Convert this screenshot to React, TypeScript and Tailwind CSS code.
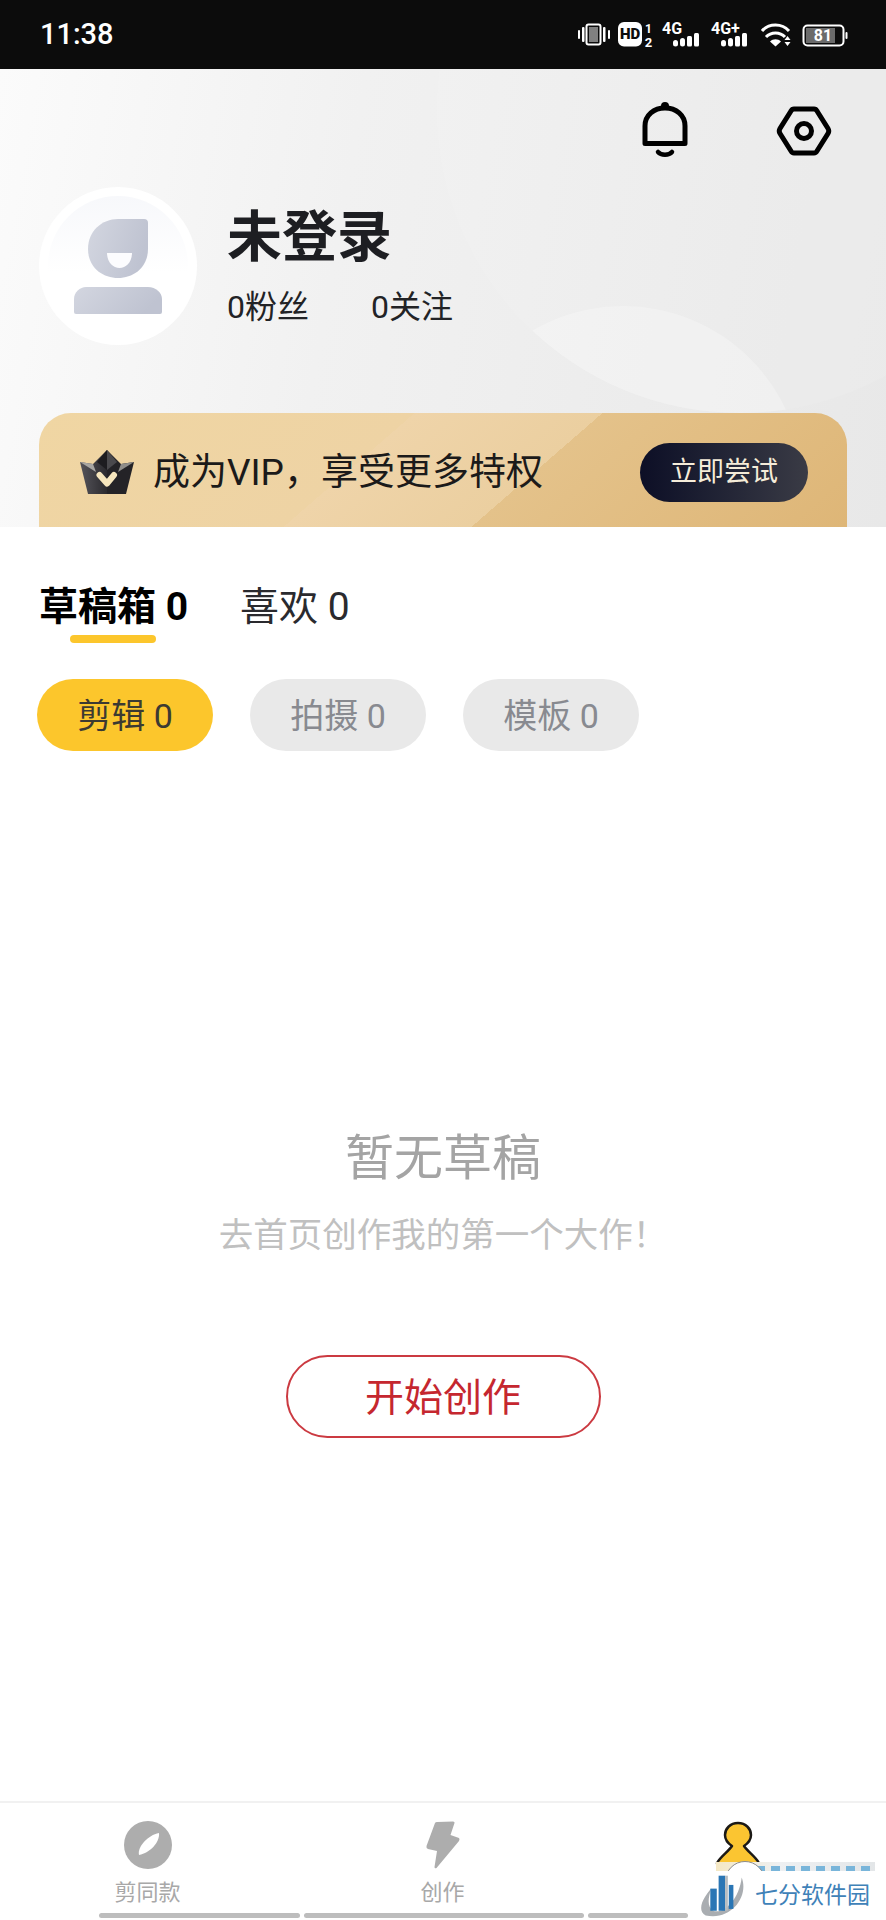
function StatusIcons() {
  // viewBox x = page x - 570
  return (
    <svg width="282" height="69" viewBox="0 0 282 69" fill="none">
      {/* vibrate */}
      <g fill="#fff">
        <rect x="8" y="30" width="2" height="9" rx="1" />
        <rect x="12" y="27" width="2.5" height="15" rx="1" />
        <rect x="33" y="27" width="2.5" height="15" rx="1" />
        <rect x="38" y="30" width="2" height="9" rx="1" />
      </g>
      <rect x="16.5" y="24.5" width="14" height="20" rx="2" stroke="#fff" strokeWidth="2" />
      <rect x="19" y="27" width="9" height="15" fill="#808080" />
      {/* HD */}
      <rect x="48" y="22" width="24" height="24.5" rx="6" fill="#fff" />
      <text x="60" y="39" textAnchor="middle" fontSize="15" fontWeight="900" fill="#0c0c0c" fontFamily="Roboto">HD</text>
      <text x="78.500" y="33" textAnchor="middle" fontSize="12" fontWeight="700" fill="#fff" fontFamily="Roboto">1</text>
      <text x="78.500" y="47" textAnchor="middle" fontSize="13" fontWeight="700" fill="#fff" fontFamily="Roboto">2</text>
      {/* 4G */}
      <text x="92" y="34" fontSize="16" fontWeight="700" fill="#fff" fontFamily="Roboto">4G</text>
      <g fill="#fff">
        <rect x="103" y="40" width="5" height="6.500" rx="2.500" />
        <rect x="110" y="38" width="5" height="8.500" rx="2.500" />
        <rect x="117" y="36" width="5" height="10.500" rx="1.500" />
        <rect x="124" y="33" width="5" height="13.500" rx="1.500" />
      </g>
      {/* 4G+ */}
      <text x="141" y="34" fontSize="16" fontWeight="700" fill="#fff" fontFamily="Roboto">4G+</text>
      <g fill="#fff">
        <rect x="151" y="40" width="5" height="6.500" rx="2.500" />
        <rect x="158" y="38" width="5" height="8.500" rx="2.500" />
        <rect x="165" y="36" width="5" height="10.500" rx="1.500" />
        <rect x="172" y="33" width="5" height="13.500" rx="1.500" />
      </g>
      {/* wifi */}
      <g stroke="#fff" strokeWidth="3" fill="none">
        <path d="M192 31 C199 23 212 23 219 31" />
        <path d="M196 37 C201 31.500 210 31.500 215 37" />
      </g>
      <path d="M200 41.500 C203 38.500 208 38.500 211 41.500 L205.500 46.500 Z" fill="#fff" />
      <path d="M217.500 36 L220.500 40 H214.500 Z M214.500 42 H220.500 L217.500 46 Z" fill="#fff" />
      {/* battery */}
      <rect x="233.500" y="25.500" width="40" height="20" rx="4" stroke="#fff" strokeWidth="2" />
      <rect x="236" y="28" width="29" height="15" fill="#6b6b6b" />
      <rect x="275.500" y="32" width="2" height="7" rx="1" fill="#fff" />
      <text x="253" y="41" textAnchor="middle" fontSize="16" fontWeight="700" fill="#fff" fontFamily="Roboto">81</text>
    </svg>
  );
}

function Bell() {
  return (
    <svg width="48" height="56" viewBox="0 0 48 56" fill="none">
      <circle cx="24" cy="4" r="4" fill="#000" />
      <path
        d="M4 41.500 V24 C4 13 13 6 24 6 C35 6 44 13 44 24 V41.500 Z"
        stroke="#000"
        strokeWidth="5"
        strokeLinejoin="round"
      />
      <path d="M17 50 C20 53.500 28 53.500 31 50" stroke="#000" strokeWidth="4.500" strokeLinecap="round" />
    </svg>
  );
}

function SettingsHex() {
  return (
    <svg width="56" height="50" viewBox="0 0 56 50" fill="none">
      <path
        d="M18 3 H38 Q40 3 41 5 L52 22.500 Q53.500 25 52 27.500 L41 45 Q40 47 38 47 H18 Q16 47 15 45 L4 27.500 Q2.500 25 4 22.500 L15 5 Q16 3 18 3 Z"
        stroke="#000"
        strokeWidth="5"
        strokeLinejoin="round"
      />
      <circle cx="28" cy="25" r="7.500" stroke="#000" strokeWidth="5" />
    </svg>
  );
}

function AvatarFigure() {
  return (
    <svg width="90" height="96" viewBox="0 0 90 96" fill="none">
      <defs>
        <linearGradient id="fig" x1="0" y1="0" x2="1" y2="0.3">
          <stop offset="0" stopColor="#d3d6e0" />
          <stop offset="1" stopColor="#bfc3d1" />
        </linearGradient>
      </defs>
      <path
        d="M14 30 C14 12 28 0 44 0 H70 Q74 0 74 4 V30 C74 48 60 59 44 59 C28 59 14 48 14 30 Z"
        fill="url(#fig)"
      />
      <path d="M33 34 H58 C58 43 52 49 45.500 49 C39 49 33 43 33 34 Z" fill="#fcfcfe" />
      <path d="M0 80 C0 73 6 68 12 68 H74 C82 68 88 74 88 80 V93 Q88 95 86 95 H2 Q0 95 0 93 Z" fill="url(#fig)" />
    </svg>
  );
}

function Crown() {
  return (
    <svg width="54" height="46" viewBox="0 0 54 46">
      <defs>
        <linearGradient id="crownL" x1="0" y1="0" x2="1" y2="0">
          <stop offset="0" stopColor="#55545a" />
          <stop offset="1" stopColor="#2b2a2e" />
        </linearGradient>
      </defs>
      <path d="M0 12 L13 14 L27 0 L27 44 H8 Z" fill="url(#crownL)" />
      <path d="M54 12 L41 14 L27 0 L27 44 H46 Z" fill="#242327" />
      <path d="M0 12 L13 14 L16 22 Z" fill="#a7a5a2" />
      <path d="M54 12 L41 14 L38 22 Z" fill="#8f8d8a" />
      <path d="M27 0 L17 12 L27 20 Z" fill="#1d1c20" />
      <path d="M27 0 L37 12 L27 20 Z" fill="#4a494d" />
      <path d="M19.500 25 L27 33.500 L34 25" stroke="#f6e6bd" strokeWidth="6" strokeLinecap="round" strokeLinejoin="round" fill="none" />
    </svg>
  );
}

function Compass() {
  return (
    <svg width="50" height="48" viewBox="0 0 50 48">
      <circle cx="25" cy="24" r="24" fill="#adadad" />
      <path d="M36 12 C37 21 27 32 16 34 C14 26 25 14 36 12 Z" fill="#fff" />
    </svg>
  );
}

function Flash() {
  return (
    <svg width="34" height="48" viewBox="0 0 34 48">
      <path
        d="M9 2 Q9.500 1 11 1 L27 0.500 Q29 0.500 28.500 2 L24.500 14 L33 17 Q34 18 33 20 L10.500 47 Q8.500 48 8.500 46 L11 30 L2 28 Q0 27.500 0.500 25 Z"
        fill="#adadad"
      />
    </svg>
  );
}

function Person() {
  return (
    <svg width="46" height="50" viewBox="0 0 46 50">
      <path
        d="M23 2 C31 2 36 8 36 14 C36 20 32 23 29 25 C33 31 40 35 44 42 L43 48 H3 L2 42 C6 35 13 31 17 25 C14 23 10 20 10 14 C10 8 15 2 23 2 Z"
        fill="#fbc531"
        stroke="#1c1a16"
        strokeWidth="2.500"
        strokeLinejoin="round"
      />
    </svg>
  );
}

function WatermarkLogo() {
  return (
    <svg width="52" height="48" viewBox="0 0 56 52" fill="none">
      <path d="M6 47 C-5 41 5 26 12 18 C8 30 8 38 14 42 C26 46 42 30 45 6 C53 26 34 53 6 47 Z" fill="#a9adb1" />
      <rect x="11" y="18" width="7" height="24" fill="#2a76b5" />
      <rect x="20" y="4" width="7" height="38" fill="#2a76b5" />
      <rect x="27" y="4" width="3" height="38" fill="#b7bcc0" />
      <rect x="31" y="14" width="5" height="26" fill="#2a76b5" />
    </svg>
  );
}

const navItems = [
  { label: "剪同款", icon: <Compass /> },
  { label: "创作", icon: <Flash /> },
];

export default function App() {
  return (
    <div className="relative flex h-[1920px] w-[886px] flex-col overflow-hidden bg-white [font-family:Roboto,'Noto_Sans_CJK_SC',sans-serif]">
      <div className="flex h-[69px] shrink-0 items-center justify-between bg-[#0c0c0c] pl-[40px] pr-[34px]">
        <span className="text-[29px] font-medium leading-none text-white">11:38</span>
        <StatusIcons />
      </div>

      <header className="relative h-[458px] shrink-0 overflow-hidden bg-[linear-gradient(100deg,#fbfbfb_0%,#f1f1f1_38%,#e8e8e8_100%)]">
        {/* background shapes */}
        <div className="absolute left-[437px] top-[-262px] h-[606px] w-[606px] overflow-hidden rounded-full bg-white/[0.07]">
          <div className="absolute left-[6px] top-[499px] h-[360px] w-[360px] rounded-full bg-white/25" />
        </div>

        <div className="relative flex flex-col">
          <div className="flex items-start justify-end gap-[87px] pr-[54px] pt-[33px]">
            <Bell />
            <div className="pt-[4px]">
              <SettingsHex />
            </div>
          </div>

          <div className="mt-[29px] flex items-center pl-[39px]">
            <div className="flex h-[158px] w-[158px] items-center justify-center rounded-full bg-white">
              <div className="flex h-[140px] w-[140px] items-center justify-center rounded-full bg-[linear-gradient(180deg,#f7f8fb_0%,#ffffff_55%)] pl-[2px] pt-[1px]">
                <AvatarFigure />
              </div>
            </div>
            <div className="ml-[30px]">
              <h1 className="text-[55px] font-bold leading-[60px] text-[#1d1e22]">未登录</h1>
              <div className="mt-[22px] flex gap-[62px] text-[32px] leading-[36px] text-[#222326]">
                <span>0粉丝</span>
                <span>0关注</span>
              </div>
            </div>
          </div>

          <div className="mx-[39px] mt-[68px] flex h-[114px] items-start justify-between overflow-hidden rounded-t-[32px] bg-[linear-gradient(139deg,#f0d6a3_0%,#eed3a4_40%,#efd4a9_40%,#ebcfa0_60%,#e4c28a_60%,#deb677_100%)] pl-[41px] pr-[39px] pt-[30px]">
            <div className="flex items-center gap-[19px] pt-[7px]">
              <Crown />
              <span className="text-[37px] leading-[46px] text-[#1b1a1a]">成为VIP，享受更多特权</span>
            </div>
            <button className="flex h-[59px] w-[168px] items-center justify-center rounded-full bg-gradient-to-r from-[#0d0f26] to-[#3a3b45] text-[27px] text-[#f5ecd9]">
              立即尝试
            </button>
          </div>
        </div>
      </header>

      <main className="flex flex-1 flex-col">
        <div className="flex items-center gap-[52px] pl-[39px] pt-[58px] text-[39px] leading-[44px]">
          <span className="font-bold text-black">草稿箱 0</span>
          <span className="text-[#2a2a2e]">喜欢 0</span>
        </div>
        <div className="ml-[70px] mt-[6px] h-[8px] w-[86px] rounded-full bg-[#fcc62c]" />

        <div className="ml-[37px] mt-[36px] flex gap-[37px] text-[34px]">
          <button className="flex h-[72px] w-[176px] items-center justify-center rounded-full bg-[#fcc62c] pt-[2px] text-[#3c3a32]">
            剪辑 0
          </button>
          <button className="flex h-[72px] w-[176px] items-center justify-center rounded-full bg-[#e9e9e9] pt-[2px] text-[#888a90]">
            拍摄 0
          </button>
          <button className="flex h-[72px] w-[176px] items-center justify-center rounded-full bg-[#e9e9e9] pt-[2px] text-[#888a90]">
            模板 0
          </button>
        </div>

        <div className="flex flex-col items-center">
          <p className="mt-[378px] text-[49px] leading-[60px] text-[#a4a4a4]">暂无草稿</p>
          <p className="mt-[24px] text-[34.500px] leading-[44px] text-[#c0c0c0]">去首页创作我的第一个大作！</p>
          <button className="mt-[98px] flex h-[83px] w-[315px] items-center justify-center rounded-full border-2 border-[#cb3a41] pt-[3px] text-[39px] text-[#c5272f]">
            开始创作
          </button>
        </div>

        <nav className="mt-auto h-[119px] border-t-2 border-[#f1f1f1]">
          <div className="flex h-[110px]">
            {navItems.map((item) => (
              <div key={item.label} className="flex w-[295px] flex-col items-center pt-[18px]">
                <div className="flex h-[48px] items-center">{item.icon}</div>
                <span className="mt-[11px] text-[22px] leading-[26px] text-[#a8a8a8]">{item.label}</span>
              </div>
            ))}
            <div className="flex w-[296px] flex-col items-center pt-[18px]">
              <Person />
            </div>
          </div>
          <div className="flex gap-[4px] pl-[99px]">
            <div className="h-[5px] w-[201px] rounded-sm bg-[#bdbdbd]" />
            <div className="h-[5px] w-[280px] rounded-sm bg-[#bdbdbd]" />
            <div className="h-[5px] w-[100px] rounded-sm bg-[#bdbdbd]" />
          </div>
        </nav>
      </main>

      {/* site watermark over the tab bar */}
      <div className="absolute left-[716px] top-[1862px] h-[10px] w-[159px] bg-[linear-gradient(90deg,#f5e8c4_0%,#eef0f2_40%,#e3e6e8_100%)]">
        <div className="absolute left-[40px] top-[4px] h-[6px] w-[118px] bg-[repeating-linear-gradient(90deg,#79b5da_0px,#79b5da_9px,transparent_9px,transparent_15px)]" />
      </div>
      <div className="absolute left-[725px] top-[1861px] h-[40px] w-[40px] rounded-full border border-[#8a8a8a] bg-white" />
      <div className="absolute bottom-0 left-[700px] flex h-[49px] w-[186px] items-center bg-white">
        <WatermarkLogo />
        <span className="ml-[3px] text-[23px] leading-none text-[#3f82b8]">七分软件园</span>
      </div>
    </div>
  );
}
